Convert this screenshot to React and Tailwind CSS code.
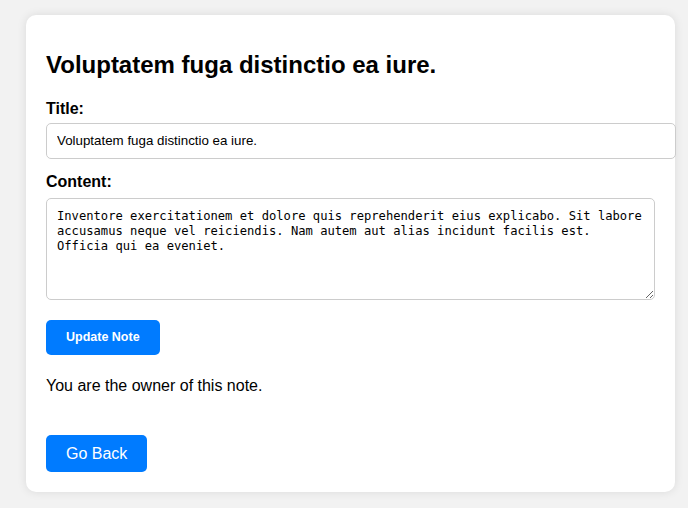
import React from "react";

const note = {
  title: "Voluptatem fuga distinctio ea iure.",
  content:
    "Inventore exercitationem et dolore quis reprehenderit eius explicabo. Sit labore accusamus neque vel reiciendis. Nam autem aut alias incidunt facilis est. Officia qui ea eveniet.",
};

const App = () => {
  return (
    <div className="min-h-screen bg-[#f2f2f2] pt-[15px] pl-[26px] font-['Liberation_Sans',Arial,sans-serif] text-black">
      <div className="w-[649px] rounded-[10px] bg-white p-5 shadow-[0_0_10px_rgba(0,0,0,0.1)]">
        <h2 className="mt-4 mb-[21px] text-[24px] font-bold leading-[28px]">{note.title}</h2>

        <form onSubmit={(e) => e.preventDefault()}>
          <label className="mb-[5px] block text-[16px] font-bold leading-[18px]">Title:</label>
          <input
            type="text"
            defaultValue={note.title}
            className="block w-[630px] rounded-[5px] border border-[#ccc] px-[10px] py-[10px] text-[13.33px] leading-[14px] outline-none"
          />

          <label className="mt-[14px] mb-[7px] block text-[16px] font-bold leading-[18px]">Content:</label>
          <textarea
            defaultValue={note.content}
            className="block h-[102px] w-full resize-y rounded-[5px] border border-[#ccc] p-[10px] font-['DejaVu_Sans_Mono',monospace] text-[12.15px] leading-[15px] outline-none"
          />

          <button
            type="submit"
            className="mt-5 block h-[35px] rounded-[5px] bg-[#007bff] px-5 text-[12.5px] font-bold text-white"
          >
            Update Note
          </button>
        </form>

        <p className="mt-[22px] text-[16px] leading-[18px]">You are the owner of this note.</p>

        <button className="mt-10 block h-[37px] rounded-[5px] bg-[#007bff] px-5 text-[16px] text-white">
          Go Back
        </button>
      </div>
    </div>
  );
};

export default App;
